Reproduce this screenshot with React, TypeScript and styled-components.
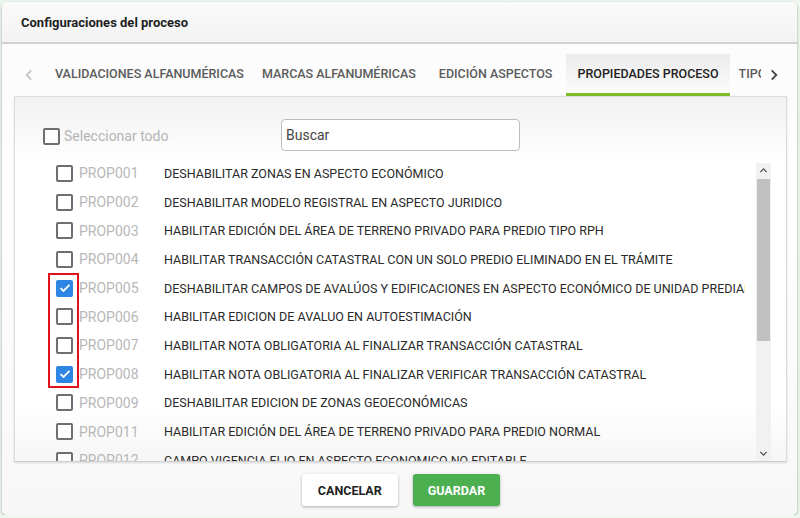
import React, { useState } from "react";
import styled, { createGlobalStyle } from "styled-components";

const Global = createGlobalStyle`
  html, body { margin: 0; padding: 0; background: #eef7ee; }
  body { font-family: Roboto, "Noto Sans", Arial, sans-serif; }
  * { box-sizing: border-box; }
`;

const Dialog = styled.div`
  margin: 2px 0 0 2px;
  width: 795px;
  height: 513px;
  background: linear-gradient(180deg, #fbfbfb 0%, #ffffff 40%, #f7f7f7 100%);
  border-radius: 5px;
  box-shadow: 0 1px 3px rgba(0,0,0,0.35);
  display: flex;
  flex-direction: column;
  overflow: hidden;
`;

const Header = styled.div`
  height: 42px;
  flex: none;
  display: flex;
  align-items: center;
  padding-left: 19px;
  font-size: 13px;
  font-weight: 700;
  color: #1e1e1e;
  background: linear-gradient(180deg, #fafafa, #f3f3f3);
  border-bottom: 2px solid #d2d2d2;
`;

const TabBar = styled.div`
  height: 52px;
  flex: none;
  display: flex;
  align-items: flex-end;
  padding: 0 10px 0 14px;
`;

const Arrow = styled.div<{ $dim?: boolean }>`
  width: 26px;
  height: 42px;
  flex: none;
  display: flex;
  align-items: center;
  justify-content: center;
  color: ${(p) => (p.$dim ? "#c4c4c4" : "#444")};
`;

const TabsTrack = styled.div`
  flex: 1;
  display: flex;
  overflow: hidden;
  padding-left: 4px;
`;

const Tab = styled.div<{ $active?: boolean; $pad: number }>`
  flex: none;
  height: 42px;
  padding: 0 ${(p) => p.$pad}px;
  display: flex;
  align-items: center;
  font-size: 12.5px;
  font-weight: 500;
  white-space: nowrap;
  color: ${(p) => (p.$active ? "#222" : "#5a5a5a")};
  background: ${(p) => (p.$active ? "linear-gradient(180deg, #ececec, #fbfbfb)" : "transparent")};
  border-bottom: 3px solid ${(p) => (p.$active ? "#7cbd2a" : "transparent")};
`;

const Panel = styled.div`
  margin: 0 10px 0 12px;
  height: 366px;
  flex: none;
  border: 1px solid #dcdcdc;
  border-bottom-color: #cfcfcf;
  background: linear-gradient(180deg, #f1f1f1 0%, #ffffff 18%, #ffffff 85%, #f6f6f6 100%);
  box-shadow: 0 1px 2px rgba(0,0,0,0.12);
  display: flex;
  flex-direction: column;
`;

const Toolbar = styled.div`
  height: 62px;
  flex: none;
  display: flex;
  align-items: center;
  padding: 13px 0 0 28px;
`;

const SelectAll = styled.label`
  display: flex;
  align-items: center;
  width: 238px;
  margin-top: 3px;
  font-size: 14px;
  color: #b4b4b4;
  gap: 4px;
`;

const Box = styled.span<{ $checked?: boolean }>`
  width: 17px;
  height: 17px;
  flex: none;
  border-radius: 2px;
  border: ${(p) => (p.$checked ? "none" : "2px solid #6f6f6f")};
  background: ${(p) => (p.$checked ? "#2e86e4" : "#fff")};
  display: flex;
  align-items: center;
  justify-content: center;
`;

const Search = styled.input`
  width: 239px;
  height: 32px;
  border: 1px solid #bdbdbd;
  border-radius: 4px;
  padding: 0 4px;
  font-family: Roboto, Arial, sans-serif;
  font-size: 14px;
  color: #333;
  background: #fff;
  outline: none;
  &::placeholder { color: #444; }
`;

const ListArea = styled.div`
  flex: 1;
  display: flex;
  min-height: 0;
  padding-left: 28px;
  padding-right: 15px;
`;

const List = styled.div`
  flex: 1;
  overflow: hidden;
  position: relative;
  margin-right: 11px;
`;

const Row = styled.div`
  height: 28.7px;
  display: flex;
  align-items: center;
  padding-left: 13px;
`;

const Code = styled.span`
  width: 91px;
  flex: none;
  padding-left: 6px;
  font-size: 14px;
  color: #b8b8b8;
`;

const Desc = styled.span`
  font-size: 12.5px;
  color: #2a2a2a;
  white-space: nowrap;
`;

const Highlight = styled.div`
  position: absolute;
  left: 5px;
  top: 114px;
  width: 31px;
  height: 115px;
  border: 2px solid #e0121b;
  pointer-events: none;
`;

const Scrollbar = styled.div`
  width: 15px;
  flex: none;
  margin-top: 4px;
  display: flex;
  flex-direction: column;
  background: #f1f1f1;
`;

const ScrollBtn = styled.div`
  height: 15px;
  display: flex;
  align-items: center;
  justify-content: center;
  color: #505050;
`;

const Thumb = styled.div`
  height: 162px;
  margin: 1px 1px 0;
  background: #c1c1c1;
`;

const Spacer = styled.div`
  flex: 1;
`;

const Footer = styled.div`
  flex: 1;
  display: flex;
  justify-content: center;
  align-items: center;
  gap: 15px;
  padding-top: 3px;
  padding-left: 3px;
`;

const Button = styled.button<{ $primary?: boolean }>`
  height: 32px;
  padding: 0 ${(p) => (p.$primary ? "15px" : "16px")};
  border: none;
  border-radius: 3px;
  font-family: Roboto, Arial, sans-serif;
  font-size: 12.5px;
  font-weight: 700;
  color: ${(p) => (p.$primary ? "#fff" : "#222")};
  background: ${(p) => (p.$primary ? "#4caf50" : "#fff")};
  box-shadow: 0 1px 3px rgba(0,0,0,0.3);
`;

const Check = () => (
  <svg width="12" height="10" viewBox="0 0 12 10">
    <path d="M1.5 5.2 L4.5 8 L10.5 1.8" fill="none" stroke="#fff" strokeWidth="1.8" />
  </svg>
);

const Chevron = ({ dir, size = 14 }: { dir: "left" | "right" | "up" | "down"; size?: number }) => {
  const d = {
    left: "M9 3 L5 7 L9 11",
    right: "M5 3 L9 7 L5 11",
    up: "M3 9 L7 5 L11 9",
    down: "M3 5 L7 9 L11 5",
  }[dir];
  return (
    <svg width={size} height={size} viewBox="0 0 14 14">
      <path d={d} fill="none" stroke="currentColor" strokeWidth="1.6" />
    </svg>
  );
};

const rows: [string, string, boolean][] = [
  ["PROP001", "DESHABILITAR ZONAS EN ASPECTO ECONÓMICO", false],
  ["PROP002", "DESHABILITAR MODELO REGISTRAL EN ASPECTO JURIDICO", false],
  ["PROP003", "HABILITAR EDICIÓN DEL ÁREA DE TERRENO PRIVADO PARA PREDIO TIPO RPH", false],
  ["PROP004", "HABILITAR TRANSACCIÓN CATASTRAL CON UN SOLO PREDIO ELIMINADO EN EL TRÁMITE", false],
  ["PROP005", "DESHABILITAR CAMPOS DE AVALÚOS Y EDIFICACIONES EN ASPECTO ECONÓMICO DE UNIDAD PREDIAL", true],
  ["PROP006", "HABILITAR EDICION DE AVALUO EN AUTOESTIMACIÓN", false],
  ["PROP007", "HABILITAR NOTA OBLIGATORIA AL FINALIZAR TRANSACCIÓN CATASTRAL", false],
  ["PROP008", "HABILITAR NOTA OBLIGATORIA AL FINALIZAR VERIFICAR TRANSACCIÓN CATASTRAL", true],
  ["PROP009", "DESHABILITAR EDICION DE ZONAS GEOECONÓMICAS", false],
  ["PROP011", "HABILITAR EDICIÓN DEL ÁREA DE TERRENO PRIVADO PARA PREDIO NORMAL", false],
  ["PROP012", "CAMPO VIGENCIA FIJO EN ASPECTO ECONOMICO NO EDITABLE", false],
];

const tabs: [string, number][] = [
  ["VALIDACIONES ALFANUMÉRICAS", 9],
  ["MARCAS ALFANUMÉRICAS", 9],
  ["EDICIÓN ASPECTOS", 14],
  ["PROPIEDADES PROCESO", 11],
  ["TIPOS DE TRÁMITE", 9],
];

export default function App() {
  const [q, setQ] = useState("");
  return (
    <>
      <Global />
      <Dialog>
        <Header>Configuraciones del proceso</Header>
        <TabBar>
          <Arrow $dim>
            <Chevron dir="left" size={16} />
          </Arrow>
          <TabsTrack>
            {tabs.map(([t, pad], i) => (
              <Tab key={t} $pad={pad} $active={i === 3}>
                {t}
              </Tab>
            ))}
          </TabsTrack>
          <Arrow>
            <Chevron dir="right" size={16} />
          </Arrow>
        </TabBar>
        <Panel>
          <Toolbar>
            <SelectAll>
              <Box />
              Seleccionar todo
            </SelectAll>
            <Search placeholder="Buscar" value={q} onChange={(e) => setQ(e.target.value)} />
          </Toolbar>
          <ListArea>
            <List>
              {rows.map(([c, d, ch]) => (
                <Row key={c}>
                  <Box $checked={ch}>{ch && <Check />}</Box>
                  <Code>{c}</Code>
                  <Desc>{d}</Desc>
                </Row>
              ))}
              <Highlight />
            </List>
            <Scrollbar>
              <ScrollBtn>
                <Chevron dir="up" size={11} />
              </ScrollBtn>
              <Thumb />
              <Spacer />
              <ScrollBtn>
                <Chevron dir="down" size={11} />
              </ScrollBtn>
            </Scrollbar>
          </ListArea>
        </Panel>
        <Footer>
          <Button>CANCELAR</Button>
          <Button $primary>GUARDAR</Button>
        </Footer>
      </Dialog>
    </>
  );
}
